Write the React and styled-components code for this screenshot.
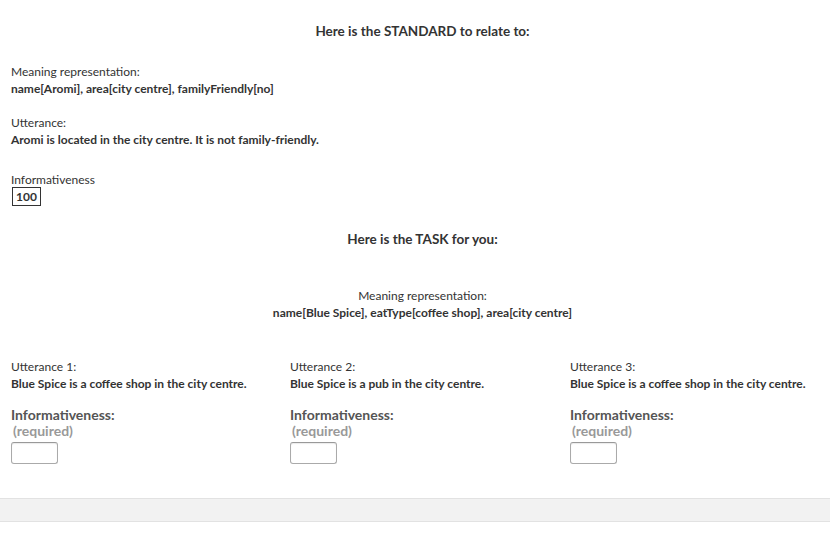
import React from 'react';
import styled, { createGlobalStyle } from 'styled-components';

const GlobalStyle = createGlobalStyle`
	html, body {
		margin: 0;
		padding: 0;
		background: #fff;
	}
	body {
		font-family: Lato, 'Liberation Sans', sans-serif;
		color: #333;
	}
`

const Page = styled.div`
	width: 830px;
	padding: 20px 0 0 11px;
	box-sizing: border-box;
`

const Title = styled.h3`
	margin: ${p => p.$top || 0}px 0 0 0;
	text-align: center;
	font-size: 13.5px;
	font-weight: 700;
	line-height: 22px;
	padding-left: 4px;
`

const Block = styled.div`
	margin-top: ${p => p.$top}px;
	font-size: 12px;
	line-height: 17px;
	text-align: ${p => (p.$center ? 'center' : 'left')};
	padding-left: ${p => (p.$center ? '4px' : '0')};
`

const Label = styled.div`
	font-weight: 400;
`

const Value = styled.div`
	font-weight: 700;
`

const Score = styled.span`
	display: inline-block;
	border: 1px solid #333;
	padding: 0 3px;
	font-weight: 700;
	line-height: 17px;
	margin-top: -1px;
	margin-left: 1px;
`

const Columns = styled.div`
	display: grid;
	grid-template-columns: 279px 280px 260px;
	margin-top: 37px;
`

const Column = styled.div`
	font-size: 12px;
	line-height: 17px;
`

const FieldTitle = styled.div`
	margin-top: 15px;
	font-size: 14px;
	font-weight: 700;
	line-height: 16px;
	color: #555;
`

const Required = styled.div`
	font-size: 14px;
	font-weight: 700;
	line-height: 16px;
	color: #999;
	padding-left: 2px;
`

const Input = styled.input`
	display: block;
	margin-top: 3px;
	width: 47px;
	height: 22px;
	box-sizing: border-box;
	border: 1px solid #aaa;
	border-top-color: #999;
	border-radius: 3px;
	background: #fff;
	box-shadow: inset 0 1px 1px rgba(0, 0, 0, 0.08);
`

const Footer = styled.div`
	margin-top: 34px;
	height: 22px;
	background: #f2f2f2;
	border-top: 1px solid #e2e2e2;
	border-bottom: 1px solid #e2e2e2;
`

const utterances = [
	'Blue Spice is a coffee shop in the city centre.',
	'Blue Spice is a pub in the city centre.',
	'Blue Spice is a coffee shop in the city centre.',
];

const App = () => {
	return (
		<>
			<GlobalStyle />
			<Page>
				<Title>Here is the STANDARD to relate to:</Title>

				<Block $top={21}>
					<Label>Meaning representation:</Label>
					<Value>name[Aromi], area[city centre], familyFriendly[no]</Value>
				</Block>

				<Block $top={17}>
					<Label>Utterance:</Label>
					<Value>Aromi is located in the city centre. It is not family-friendly.</Value>
				</Block>

				<Block $top={23}>
					<Label>Informativeness</Label>
					<Score>100</Score>
				</Block>

				<Title $top={22}>Here is the TASK for you:</Title>

				<Block $top={37} $center>
					<Label>Meaning representation:</Label>
					<Value>name[Blue Spice], eatType[coffee shop], area[city centre]</Value>
				</Block>

				<Columns>
					{utterances.map((text, i) => (
						<Column key={i}>
							<Label>Utterance {i + 1}:</Label>
							<Value>{text}</Value>
							<FieldTitle>Informativeness:</FieldTitle>
							<Required>(required)</Required>
							<Input type="text" />
						</Column>
					))}
				</Columns>
			</Page>
			<Footer />
		</>
	);
}

export default App;
